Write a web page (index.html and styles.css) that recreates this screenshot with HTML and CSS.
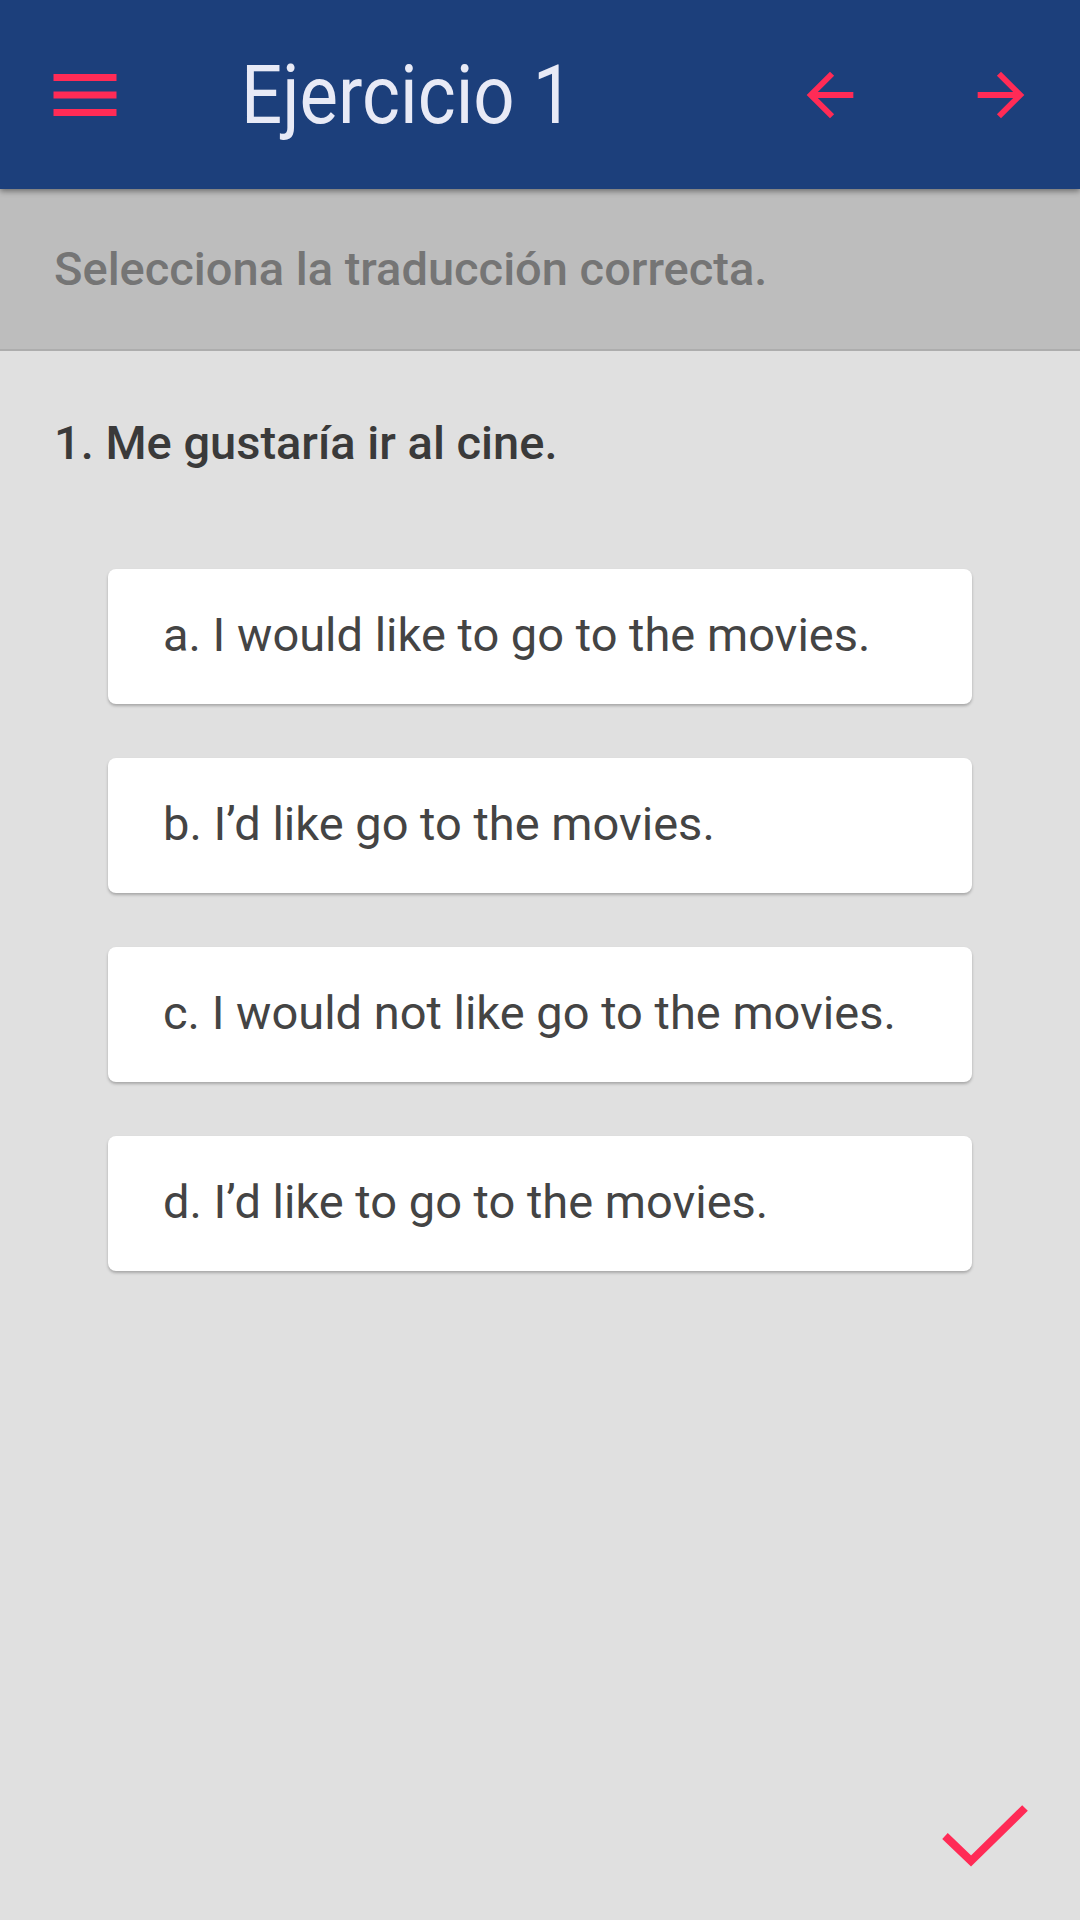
FILE: index.html
```html
<!DOCTYPE html>
<html lang="es">
<head>
<meta charset="utf-8">
<title>Ejercicio 1</title>
<link rel="stylesheet" href="styles.css">
</head>
<body>
<div class="screen">
  <header class="appbar">
    <svg class="menu-icon" viewBox="0 0 24 24" width="84" height="84"><path d="M3 18h18v-2H3v2zm0-5h18v-2H3v2zm0-7v2h18V6H3z" fill="#ff2b56"/></svg>
    <h1 class="title">Ejercicio 1</h1>
    <div class="nav">
      <svg class="nav-icon" viewBox="0 0 24 24" width="70" height="70"><path d="M20 11H7.83l5.59-5.59L12 4l-8 8 8 8 1.41-1.41L7.83 13H20v-2z" fill="#ff2b56"/></svg>
      <svg class="nav-icon" viewBox="0 0 24 24" width="70" height="70"><path d="M12 4l-1.41 1.41L16.17 11H4v2h12.17l-5.58 5.59L12 20l8-8z" fill="#ff2b56"/></svg>
    </div>
  </header>
  <div class="instruction">Selecciona la traducción correcta.</div>
  <main class="content">
    <p class="question">1. Me gustaría ir al cine.</p>
    <div class="options">
      <div class="option">a. I would like to go to the movies.</div>
      <div class="option">b. I’d like go to the movies.</div>
      <div class="option">c. I would not like go to the movies.</div>
      <div class="option">d. I’d like to go to the movies.</div>
    </div>
  </main>
  <svg class="check" viewBox="0 0 100 80" width="100" height="80"><path d="M10 41 L36 66 L90 13" fill="none" stroke="#ff2b56" stroke-width="8"/></svg>
</div>
</body>
</html>
```

FILE: styles.css
```css
html, body {
  margin: 0;
  padding: 0;
}
body {
  width: 1080px;
  height: 1920px;
  background: #e0e0e0;
  font-family: Roboto, "Noto Sans", sans-serif;
  overflow: hidden;
}
.screen {
  position: relative;
  width: 1080px;
  height: 1920px;
  display: flex;
  flex-direction: column;
}
.appbar {
  height: 189px;
  flex: none;
  background: #1c3f7b;
  display: flex;
  align-items: center;
  padding-left: 43px;
  padding-right: 44px;
  box-shadow: 0 2px 6px rgba(0,0,0,0.45);
  position: relative;
  z-index: 2;
}
.menu-icon { display: block; flex: none; }
.title {
  margin: 0 0 0 114px;
  font-size: 82px;
  font-weight: 400;
  color: #e8eaf6;
  line-height: 1;
  transform: scaleX(0.885);
  transform-origin: left center;
  white-space: nowrap;
}
.nav {
  margin-left: auto;
  display: flex;
  gap: 101px;
}
.nav-icon { display: block; }
.instruction {
  height: 160px;
  flex: none;
  background: #bdbdbd;
  border-bottom: 2px solid #adadad;
  display: flex;
  align-items: center;
  padding-left: 54px;
  padding-bottom: 2px;
  box-sizing: border-box;
  height: 162px;
  font-size: 47px;
  font-weight: 500;
  color: #757575;
}
.content {
  flex: 1;
  padding: 0 108px;
}
.question {
  margin: 64px 0 0 -54px;
  font-size: 47px;
  font-weight: 500;
  color: #3a3a3a;
  line-height: 56px;
}
.options {
  margin-top: 98px;
  display: flex;
  flex-direction: column;
  gap: 54px;
}
.option {
  height: 135px;
  box-sizing: border-box;
  background: #ffffff;
  border-radius: 8px;
  box-shadow: 0 2px 3px rgba(0,0,0,0.25);
  display: flex;
  align-items: center;
  padding-left: 55px;
  padding-bottom: 4px;
  font-size: 47px;
  color: #444444;
}
.check {
  position: absolute;
  right: 45px;
  bottom: 45px;
}
```
